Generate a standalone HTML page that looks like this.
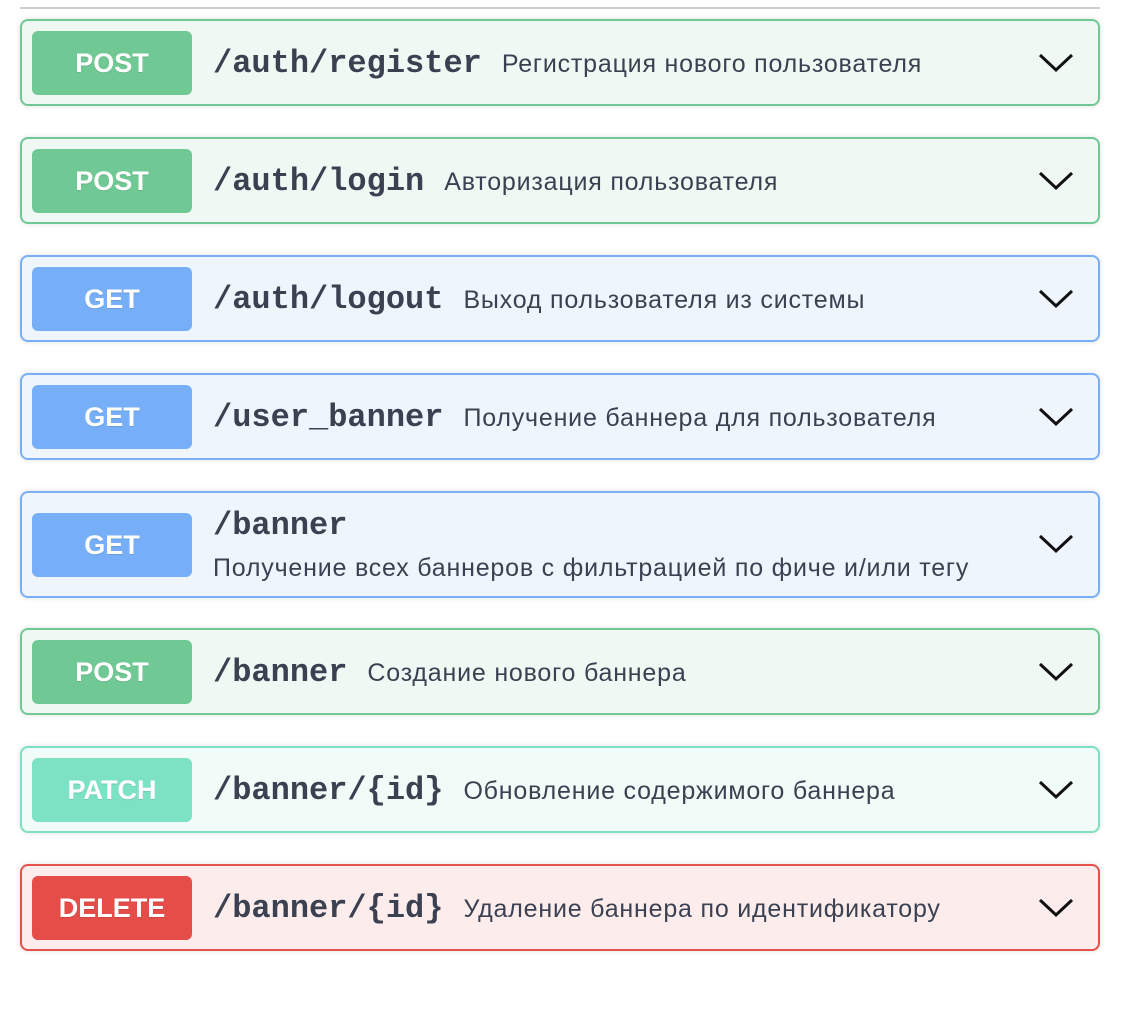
<!DOCTYPE html>
<html><head><meta charset="utf-8"><style>
body{margin:0;background:#fff;width:1134px;height:1016px;overflow:hidden;font-family:"Liberation Sans",sans-serif;}
.line{position:absolute;left:20px;top:7px;width:1080px;height:2px;background:#cdcdcf}
.op{position:absolute;left:20px;width:1076px;height:83px;border:2px solid;border-radius:8px;box-shadow:0 0 6px rgba(0,0,0,.12)}
.b{position:absolute;left:10px;top:10px;width:160px;height:64px;border-radius:6px;color:#fff;font-weight:bold;font-size:27px;text-align:center;line-height:64px;text-shadow:0 1px 0 rgba(0,0,0,.1)}
.p{position:absolute;left:191px;top:23px;font-family:"Liberation Mono",monospace;font-weight:bold;font-size:32px;color:#3b4151;white-space:nowrap;line-height:40px}
.p span{font-family:"Liberation Sans",sans-serif;font-weight:normal;font-size:25px;letter-spacing:0.8px;margin-left:20px;vertical-align:0}
.d{position:absolute;left:191px;font-size:25px;letter-spacing:0.8px;color:#3b4151;white-space:nowrap}
svg{position:absolute;right:24px;top:31px}
.post{border-color:#70c995;background:#eff8f3}.post .b{background:#70c995}
.get{border-color:#7aaef5;background:#eff5fd}.get .b{background:#76aef7}
.patch{border-color:#7ddfc3;background:#f1fbf8}.patch .b{background:#7de2c4}
.del{border-color:#e5524a;background:#fcecec}.del .b{background:#e54d48}
</style></head><body>
<div class="line"></div>
<div class="op post" style="top:19px"><div class="b">POST</div><div class="p">/auth/register<span>Регистрация нового пользователя</span></div><svg width="36" height="22" viewBox="0 0 36 22"><path d="M2 3 L18 18 L34 3" fill="none" stroke="#111" stroke-width="3"/></svg></div>
<div class="op post" style="top:137px"><div class="b">POST</div><div class="p">/auth/login<span>Авторизация пользователя</span></div><svg width="36" height="22" viewBox="0 0 36 22"><path d="M2 3 L18 18 L34 3" fill="none" stroke="#111" stroke-width="3"/></svg></div>
<div class="op get" style="top:255px"><div class="b">GET</div><div class="p">/auth/logout<span>Выход пользователя из системы</span></div><svg width="36" height="22" viewBox="0 0 36 22"><path d="M2 3 L18 18 L34 3" fill="none" stroke="#111" stroke-width="3"/></svg></div>
<div class="op get" style="top:373px"><div class="b">GET</div><div class="p">/user_banner<span>Получение баннера для пользователя</span></div><svg width="36" height="22" viewBox="0 0 36 22"><path d="M2 3 L18 18 L34 3" fill="none" stroke="#111" stroke-width="3"/></svg></div>
<div class="op get" style="top:491px;height:103px"><div class="b" style="top:20px">GET</div><div class="p" style="top:13px">/banner</div><div class="d" style="top:61px">Получение всех баннеров с фильтрацией по фиче и/или тегу</div><svg width="36" height="22" viewBox="0 0 36 22" style="top:40px"><path d="M2 3 L18 18 L34 3" fill="none" stroke="#111" stroke-width="3"/></svg></div>
<div class="op post" style="top:628px"><div class="b">POST</div><div class="p">/banner<span>Создание нового баннера</span></div><svg width="36" height="22" viewBox="0 0 36 22"><path d="M2 3 L18 18 L34 3" fill="none" stroke="#111" stroke-width="3"/></svg></div>
<div class="op patch" style="top:746px"><div class="b">PATCH</div><div class="p">/banner/{id}<span>Обновление содержимого баннера</span></div><svg width="36" height="22" viewBox="0 0 36 22"><path d="M2 3 L18 18 L34 3" fill="none" stroke="#111" stroke-width="3"/></svg></div>
<div class="op del" style="top:864px"><div class="b">DELETE</div><div class="p">/banner/{id}<span>Удаление баннера по идентификатору</span></div><svg width="36" height="22" viewBox="0 0 36 22"><path d="M2 3 L18 18 L34 3" fill="none" stroke="#111" stroke-width="3"/></svg></div>
</body></html>
